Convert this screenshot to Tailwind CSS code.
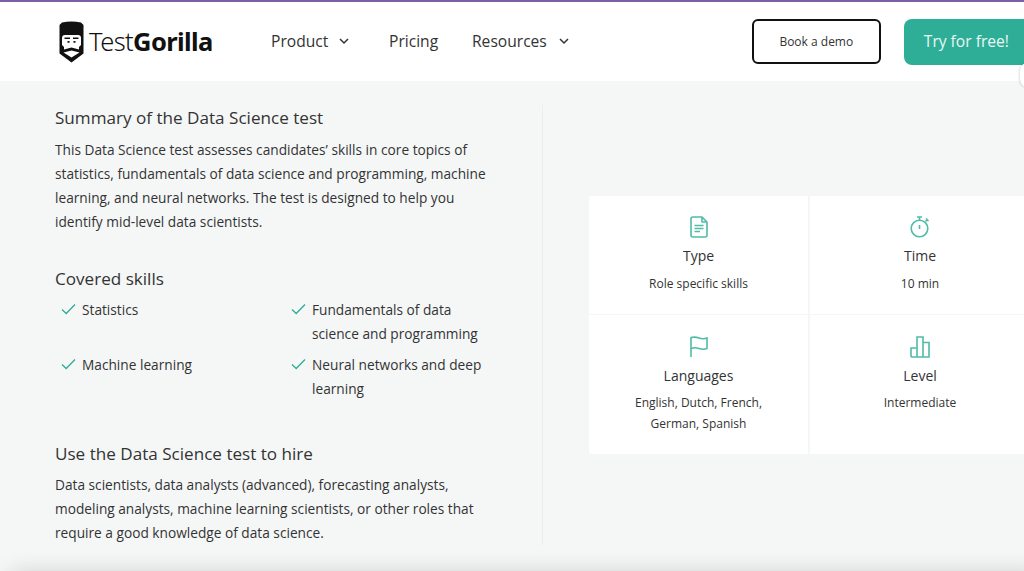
<!DOCTYPE html>
<html lang="en">
<head>
  <meta charset="UTF-8" />
  <meta name="viewport" content="width=device-width, initial-scale=1.0" />
  <title>Data Science test</title>
  <script src="https://cdn.jsdelivr.net/npm/@tailwindcss/browser@4"></script>
</head>
<body class="relative h-[571px] w-[1024px] overflow-hidden bg-[#f5f7f7] font-['Open_Sans',sans-serif] text-[#333]">

  <!-- Navigation -->
  <header class="relative flex h-[81px] items-center border-t-2 border-[#7b5ea7] bg-white pl-[59px]">
    <svg class="h-[42px] w-[25px] shrink-0" viewBox="0 0 25 42">
      <path fill="#111" d="M3 1.5 Q12.5 -0.5 22 1.5 L24.5 4 V32.5 L12.5 41.5 L.5 32.5 V4 Z" />
      <path fill="#fff" d="M3 17 Q3 14 6 14 H19 Q22 14 22 17 V24 L20 26 V28.5 L12.5 26.5 L5 28.5 V26 L3 24 Z" />
      <path fill="#fff" d="M4.5 31.5 L12.5 29.5 L20.5 31.5 L12.5 36.5 Z" />
      <path fill="#111" d="M5.5 16.5 H11 V18 H5.5 Z M14 16.5 H19.5 V18 H14 Z M8.5 20 H10.5 V21.8 H8.5 Z M14.5 20 H16.5 V21.8 H14.5 Z" />
    </svg>
    <div class="ml-[5px] w-[130px] shrink-0 whitespace-nowrap font-['Noto_Sans',sans-serif] text-[25.5px] leading-none tracking-[-0.6px] font-light text-[#111]">Test<span class="font-bold">Gorilla</span></div>

    <nav class="ml-[52px] flex items-center text-[15.6px] text-[#333]">
      <a class="flex w-[118px] items-center">Product
        <svg class="ml-[11px] h-[10px] w-[10px]" viewBox="0 0 10 10" fill="none" stroke="#333" stroke-width="1.5"><path d="M1 3 L5 7 L9 3" /></svg>
      </a>
      <a class="w-[83px]">Pricing</a>
      <a class="flex items-center">Resources
        <svg class="ml-[12px] h-[10px] w-[10px]" viewBox="0 0 10 10" fill="none" stroke="#333" stroke-width="1.5"><path d="M1 3 L5 7 L9 3" /></svg>
      </a>
    </nav>

    <a class="ml-[183px] flex h-[45px] w-[129px] shrink-0 items-center justify-center rounded-[6px] border-2 border-[#111] text-[12px] text-[#333]">Book a demo</a>
    <a class="ml-[23px] flex h-[46px] w-[140px] shrink-0 items-center rounded-[8px] bg-[#2ead97] pl-[20px] text-[15.6px] text-white/90">Try for free!</a>
  </header>
  <div class="absolute top-[62px] -right-[14px] h-[26px] w-[18px] rounded-full bg-white shadow-[0_0_3px_rgba(0,0,0,0.25)]"></div>

  <main class="flex h-[490px] pl-[55px]">
    <!-- Left column -->
    <div class="mt-[24px] h-[440px] w-[488px] shrink-0 border-r border-[#eceeee] pr-[45px]">
      <h2 class="text-[17.1px] leading-[26px]">Summary of the Data Science test</h2>
      <p class="mt-[7px] text-[13.7px] leading-[24px]">This Data Science test assesses candidates’ skills in core topics of statistics, fundamentals of data science and programming, machine learning, and neural networks. The test is designed to help you identify mid-level data scientists.</p>

      <h2 class="mt-[32px] text-[17.1px] leading-[26px]">Covered skills</h2>
      <ul class="mt-[6px] grid grid-cols-[230px_1fr] gap-y-[7px] text-[13.7px] leading-[24px]">
        <li class="flex pl-[6px]">
          <svg class="mt-[4px] mr-[6px] h-[14px] w-[15px] shrink-0" viewBox="0 0 15 14" fill="none" stroke="#2ead97" stroke-width="1.3"><path d="M1 7.5 L5.2 11.5 L14 2.5" /></svg>
          <span>Statistics</span>
        </li>
        <li class="flex pl-[6px]">
          <svg class="mt-[4px] mr-[6px] h-[14px] w-[15px] shrink-0" viewBox="0 0 15 14" fill="none" stroke="#2ead97" stroke-width="1.3"><path d="M1 7.5 L5.2 11.5 L14 2.5" /></svg>
          <span>Fundamentals of data science and programming</span>
        </li>
        <li class="flex pl-[6px]">
          <svg class="mt-[4px] mr-[6px] h-[14px] w-[15px] shrink-0" viewBox="0 0 15 14" fill="none" stroke="#2ead97" stroke-width="1.3"><path d="M1 7.5 L5.2 11.5 L14 2.5" /></svg>
          <span>Machine learning</span>
        </li>
        <li class="flex pl-[6px]">
          <svg class="mt-[4px] mr-[6px] h-[14px] w-[15px] shrink-0" viewBox="0 0 15 14" fill="none" stroke="#2ead97" stroke-width="1.3"><path d="M1 7.5 L5.2 11.5 L14 2.5" /></svg>
          <span>Neural networks and deep learning</span>
        </li>
      </ul>

      <h2 class="mt-[40px] text-[17.1px] leading-[26px]">Use the Data Science test to hire</h2>
      <p class="mt-[6px] text-[13.7px] leading-[24px]">Data scientists, data analysts (advanced), forecasting analysts, modeling analysts, machine learning scientists, or other roles that require a good knowledge of data science.</p>
    </div>

    <!-- Right column -->
    <div class="ml-[46px] mt-[115px] grid h-[258px] w-[441px] shrink-0 grid-cols-[219px_220px] grid-rows-[118px_139px] gap-x-[2px] gap-y-[1px] text-center">
      <div class="rounded-tl-[3px] bg-white pt-[20px]">
        <svg class="mx-auto h-[22px] w-[18px]" viewBox="0 0 18 22" fill="none" stroke="#4fbca9" stroke-width="1.6" stroke-linejoin="round"><path d="M3 1 H12 L17 6 V19 Q17 21 15 21 H3 Q1 21 1 19 V3 Q1 1 3 1 Z" /><path d="M12 1 V6 H17" /><path d="M4.5 9.5 H13.5 M4.5 12.5 H13.5 M4.5 15.5 H10" /></svg>
        <div class="mt-[8px] text-[14px] leading-[20px]">Type</div>
        <p class="mt-[7px] text-[12px] leading-[21px]">Role specific skills</p>
      </div>
      <div class="bg-white pt-[20px]">
        <svg class="mx-auto h-[22px] w-[20px]" viewBox="0 0 20 22" fill="none" stroke="#4fbca9" stroke-width="1.6"><circle cx="9.5" cy="12.5" r="8.3" /><path d="M7 1 H12 M9.5 1 V4 M9.5 9 V13 M15.5 5.5 L17.5 3.5 M16 2.5 L18.5 5" /></svg>
        <div class="mt-[8px] text-[14px] leading-[20px]">Time</div>
        <p class="mt-[7px] text-[12px] leading-[21px]">10 min</p>
      </div>
      <div class="rounded-bl-[3px] bg-white pt-[21px]">
        <svg class="mx-auto h-[22px] w-[18px]" viewBox="0 0 18 22" fill="none" stroke="#4fbca9" stroke-width="1.6"><path d="M1 21 V1.5 Q5 0.5 9 2 T17 2 V12.5 Q13 14 9 12.5 T1 12.5" /></svg>
        <div class="mt-[8px] text-[14px] leading-[20px]">Languages</div>
        <p class="mx-auto mt-[6px] w-[150px] text-[12px] leading-[21px]">English, Dutch, French, German, Spanish</p>
      </div>
      <div class="bg-white pt-[21px]">
        <svg class="mx-auto h-[22px] w-[20px]" viewBox="0 0 20 22" fill="none" stroke="#4fbca9" stroke-width="1.6"><path d="M1 21 V12 H7 V21 M7 21 V1 H13 V21 M13 21 V6.5 H19 V21 H1 Z" /></svg>
        <div class="mt-[8px] text-[14px] leading-[20px]">Level</div>
        <p class="mt-[6px] text-[12px] leading-[21px]">Intermediate</p>
      </div>
    </div>
  </main>

  <!-- Shadow of the next section, sitting just under the fold -->
  <div class="absolute top-[571px] left-[8px] -right-[20px] h-[60px] rounded-[12px] bg-white shadow-[0_0_22px_rgba(0,0,0,0.14)]"></div>
</body>
</html>
